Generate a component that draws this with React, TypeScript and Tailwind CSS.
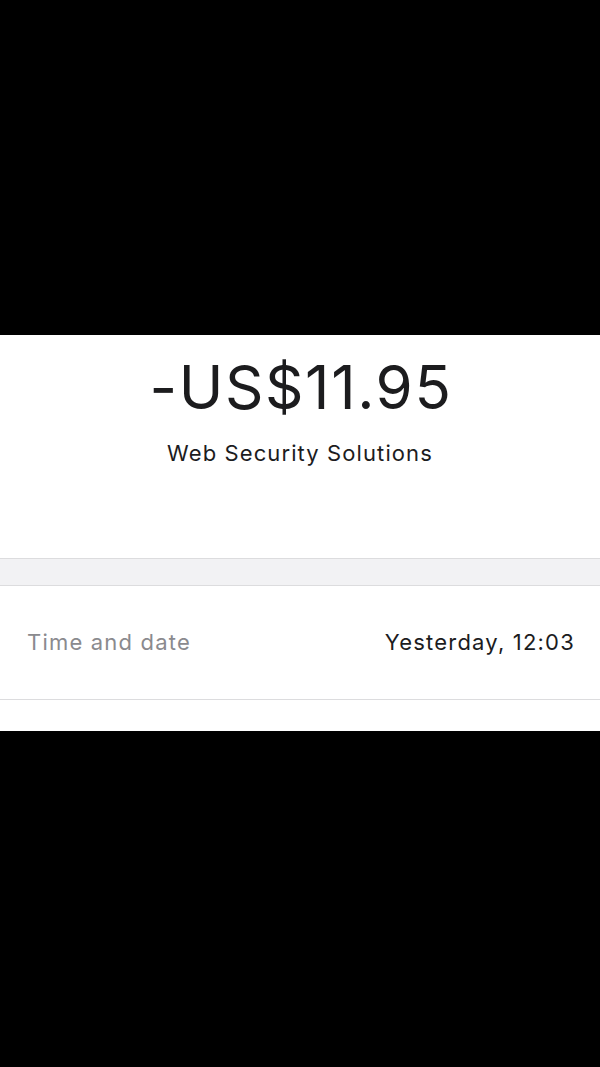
import React from 'react';

export default function App() {
  return (
    <div className="flex h-[1067px] w-[600px] flex-col bg-black font-['Inter','Liberation_Sans',sans-serif]">
      <div className="h-[335px] shrink-0 bg-black" />

      <section className="flex h-[224px] shrink-0 flex-col items-center border-b border-[#dcdcde] bg-white">
        <h1 className="mt-[16px] pl-[2px] text-[60px] leading-[72px] font-normal tracking-[1.6px] text-[#1c1c1e]">
          -US$11.95
        </h1>
        <p className="mt-[16px] text-[22px] leading-[28px] tracking-[1.1px] text-[#1c1c1e]">Web Security Solutions</p>
      </section>

      <div className="h-[27px] shrink-0 border-b border-[#dcdcde] bg-[#f2f2f4]" />

      <div className="flex h-[114px] shrink-0 items-center justify-between border-b border-[#dcdcde] bg-white pr-[25px] pl-[27px] text-[22px] tracking-[1.2px]">
        <span className="text-[#8a8a8e]">Time and date</span>
        <span className="text-[#1c1c1e]">Yesterday, 12:03</span>
      </div>

      <div className="h-[31px] shrink-0 bg-white" />
      <div className="flex-1 bg-black" />
    </div>
  );
}
